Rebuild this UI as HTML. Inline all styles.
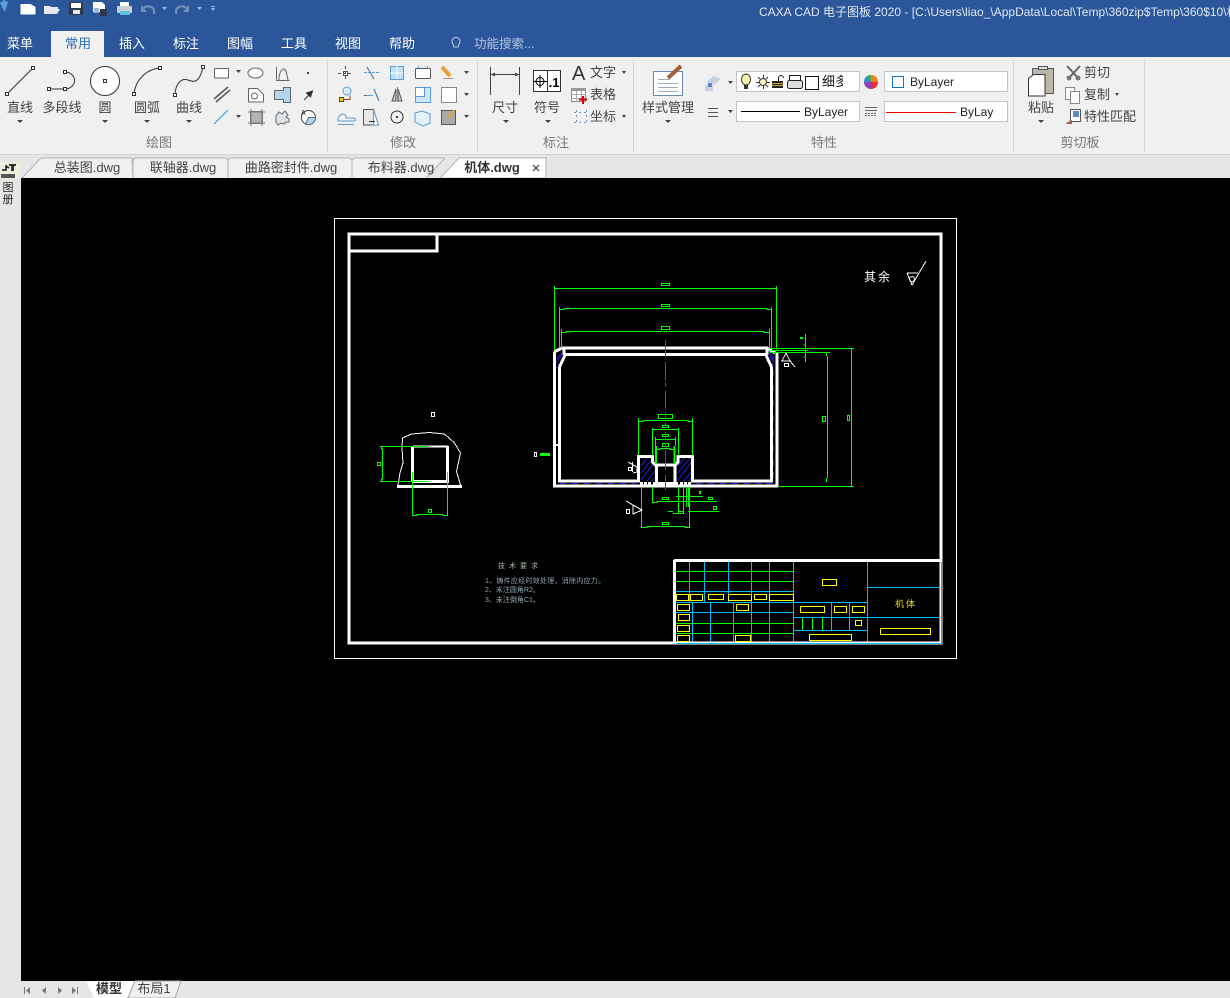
<!DOCTYPE html>
<html><head><meta charset="utf-8"><style>
html,body{margin:0;padding:0;background:#000;width:1230px;height:998px;overflow:hidden}
svg{display:block}
text{font-family:"Liberation Sans","Noto Sans CJK SC",sans-serif;font-size:13px;fill:#444}
.c{text-anchor:middle}
.w{fill:#fff}
.g{fill:#777}
.cad rect,.cad path,.cad line{shape-rendering:crispEdges}
.a{fill:#444}
</style></head><body>
<svg width="1230" height="998" viewBox="0 0 1230 998" xmlns="http://www.w3.org/2000/svg">
<rect width="1230" height="998" fill="#e6e6e6"/>
<rect width="1230" height="57" fill="#2b579a"/>
<rect y="57" width="1230" height="97" fill="#f0f0f0"/>
<rect y="154" width="1230" height="1" fill="#d4d4d4"/>
<!-- quick access -->
<path d="M0 3l4-3 4 2-3 10-2-3z" fill="#5aa0e0"/>
<path d="M20.500 4h10l5 3v7.500h-15z" fill="#fff"/>
<path d="M44 6h6l1 1h7v2H49l-2 5H44zM48 9h12l-3 5H45z" fill="#e4e9f0"/>
<rect x="69" y="2" width="14" height="13" rx="1" fill="#2f3a48"/><rect x="71" y="3" width="10" height="5" fill="#fff"/><rect x="73" y="10" width="7" height="4" fill="#dfe6ee"/>
<path d="M93 2h9l3 3v7H93z" fill="#fff"/><rect x="100" y="9" width="7" height="7" fill="#2f3a48"/><rect x="94" y="8" width="5" height="5" fill="#9db7d8"/>
<rect x="120" y="2" width="9" height="5" fill="#fff"/><rect x="117" y="6" width="15" height="7" rx="1" fill="#c8d0da"/><rect x="120" y="11" width="10" height="4" fill="#5bc5e0"/>
<path d="M143 9a6 5 0 0 1 11 1v4" fill="none" stroke="#6f8fbd" stroke-width="2.200"/><path d="M141 5v7h6z" fill="#6f8fbd"/>
<path d="M162 7h5l-2.500 3z" fill="#9db7d8"/>
<path d="M187 9a6 5 0 0 0-11 1v4" fill="none" stroke="#6f8fbd" stroke-width="2.200"/><path d="M189 5v7h-6z" fill="#6f8fbd"/>
<path d="M197 7h5l-2.500 3z" fill="#9db7d8"/>
<path d="M211 6h4v1h-4zM211 8h4l-2 3z" fill="#9db7d8"/>
<text x="759" y="16" class="w" style="font-size:12px;fill:#dfe7f2">CAXA CAD 电子图板 2020 - [C:\Users\liao_\AppData\Local\Temp\360zip$Temp\360$10\机</text>
<!-- tabs -->
<rect x="51" y="31" width="53" height="27" fill="#f0f0f0"/>
<text x="20" y="48" class="c w">菜单</text>
<text x="78" y="48" class="c" style="fill:#2b6cb5">常用</text>
<text x="132" y="48" class="c w">插入</text>
<text x="186" y="48" class="c w">标注</text>
<text x="240" y="48" class="c w">图幅</text>
<text x="294" y="48" class="c w">工具</text>
<text x="348" y="48" class="c w">视图</text>
<text x="402" y="48" class="c w">帮助</text>
<path d="M453 44a4 4 0 1 1 6 0l-1 3h-4z" fill="none" stroke="#c0cde0"/>
<text x="474" y="48" style="fill:#b4c4dc;font-size:12.5px">功能搜索...</text>
<!-- separators -->
<g fill="#d4d4d4"><rect x="327" y="60" width="1" height="92"/><rect x="477" y="60" width="1" height="92"/><rect x="633" y="60" width="1" height="92"/><rect x="1013" y="60" width="1" height="92"/><rect x="1144" y="60" width="1" height="92"/></g>
<!-- draw group -->
<g fill="none" stroke="#333">
<path d="M7 94L33 68"/><rect x="5.500" y="92.500" width="3" height="3" fill="#fff"/><rect x="31.500" y="66.500" width="3" height="3" fill="#fff"/>
<path d="M49 89H65M65 72a9 8 0 0 1 0 17"/><rect x="47.500" y="87.500" width="3" height="3" fill="#fff"/><rect x="63.500" y="87.500" width="3" height="3" fill="#fff"/><rect x="63.500" y="70.500" width="3" height="3" fill="#fff"/>
<circle cx="105" cy="81" r="14.500" fill="#fff"/><rect x="103.500" y="79.500" width="3" height="3" fill="#fff"/>
<path d="M134 93C136 79 147 69 160 68"/><rect x="132.500" y="92.500" width="3" height="3" fill="#fff"/><rect x="158.500" y="66.500" width="3" height="3" fill="#fff"/>
<path d="M175 94C176 82 182 78 188 80S199 84 203 67"/><rect x="173.500" y="93.500" width="3" height="3" fill="#fff"/><rect x="201.500" y="65.500" width="3" height="3" fill="#fff"/>
</g>
<text x="20" y="112" class="c">直线</text><text x="62" y="112" class="c">多段线</text><text x="105" y="112" class="c">圆</text><text x="147" y="112" class="c">圆弧</text><text x="189" y="112" class="c">曲线</text>
<path class="a" d="M17 120h6l-3 3zM102 120h6l-3 3zM144 120h6l-3 3zM186 120h6l-3 3zM236 70h5l-2.500 3zM236 115h5l-2.500 3z"/>
<text x="159" y="147" class="c g">绘图</text>
<!-- small draw icons -->
<g fill="none" stroke="#666">
<rect x="214.500" y="68.500" width="14" height="9.500" fill="#fff"/>
<path d="M214 99L228 87M216 102L230 90" stroke-width="1.500" stroke="#555"/>
<path d="M214 124L228 110" stroke="#3aa0e0" stroke-width="1.200"/>
<ellipse cx="255.500" cy="73" rx="7.500" ry="5" fill="#fff"/>
<path d="M248.500 88.500h9l6 6v7.500h-15z" fill="#fff"/><circle cx="254.500" cy="96" r="3"/>
<rect x="250.500" y="111.500" width="12" height="12" fill="#b4b4b4" stroke="#777"/><path d="M248 112h17M248 123h17M251 109v17M262 109v17" stroke="#777"/>
<path d="M276.500 67v13.500h13M279 80c0-8 3-11 5-11s3 6 4 11"/>
<path d="M274.500 90.500h9v-3h7v15h-7v-3h-9z" fill="#b6d4ee"/>
<path d="M276 116l3-4 3 2 3-3 3 4-2 2 3 2v3h-3l-2 2-3-1-3 2-2-3z" fill="#dde4ea"/>
<circle cx="308.500" cy="117.500" r="7" fill="#fff" stroke="#444"/><path d="M308.500 117.500h7a7 7 0 0 1-10 6.500z" fill="#a9d6f5"/>
</g>
<text x="301" y="115" style="font-size:7px;fill:#222">A</text>
<rect x="307" y="72" width="2" height="2" fill="#444"/>
<path d="M304 100l8-8M312.500 91l-6 2 4 4z" stroke="#333" fill="#222"/>
<!-- modify group -->
<g fill="none" stroke="#555">
<path d="M345.500 66v14M338 73.500h15" stroke-dasharray="3 2"/><rect x="343.500" y="71.500" width="4" height="4"/>
<path d="M364 72.500h15" stroke="#5b9bd5" stroke-dasharray="3 1"/><path d="M367 67l7 12" stroke="#2f6fb5"/>
<rect x="390.500" y="66.500" width="13" height="13" fill="#bfe0f5" stroke="#5b9bd5"/><path d="M397 66v13M390 73h13" stroke="#fff"/>
<rect x="415.500" y="68.500" width="15" height="10" rx="1" fill="#fff"/><path d="M418.500 66v3M427.500 66v3" stroke="#5b9bd5"/>
<path d="M442 67l8 9" stroke="#e8a030" stroke-width="4"/><path d="M443 78.500h10" stroke="#999"/>
<rect x="339.500" y="97.500" width="4" height="4" fill="#f0d000" stroke="#444"/><circle cx="347" cy="91" r="4" stroke="#5b9bd5" fill="#d8ecf8"/><path d="M343 99.500h7v-4" stroke="#b03030"/>
<path d="M364 95.500h5" stroke="#555" stroke-dasharray="3 1"/><path d="M374 89l5 12" stroke="#2f6fb5"/><path d="M366 95.500h7" stroke="#5b9bd5"/>
<path d="M396 89l-4 12h4zM398 89l4 12h-4z" fill="#ccc"/><path d="M397.500 87v15" stroke="#5b9bd5"/>
<rect x="415.500" y="87.500" width="15" height="15" fill="#cfe8fa" stroke="#5b9bd5"/><rect x="415.500" y="87.500" width="9" height="9" fill="#fff" stroke="#5b9bd5"/>
<rect x="441.500" y="87.500" width="15" height="15" fill="#fff" stroke="#888"/>
<path d="M338 120c0-4 3-6 5-6s3 2 3 4h8c2 0 2 3 0 3h-16zM338 124.500h16" stroke="#5b9bd5"/>
<path d="M363.500 109.500h10l5 15.500h-15z" fill="#e6e6e6"/><path d="M373.500 109.500l5 15.500h-5z" fill="#fff" stroke="#5b9bd5"/><path d="M369 121.500h6" stroke="#333"/>
<circle cx="397" cy="117" r="6" stroke="#333"/><rect x="396" y="116" width="2" height="2" fill="#333" stroke="none"/>
<path d="M415 113l7-2 8 3v9l-7 3-8-4z" fill="#e4f2fb" stroke="#5b9bd5"/>
<rect x="441.500" y="110.500" width="14" height="14" fill="#aaa"/><path d="M454 110l-6 8" stroke="#e8a030" stroke-width="2"/>
</g>
<path class="a" d="M464 71h5l-2.500 3zM464 93h5l-2.500 3zM464 115h5l-2.500 3zM503 120h6l-3 3zM545 120h6l-3 3zM622 71h4l-2 3zM622 115h4l-2 3z"/>
<text x="403" y="147" class="c g">修改</text>
<!-- annotate -->
<path d="M490.500 67v28M519.500 67v28M491 74.500h28" fill="none" stroke="#444"/><path d="M491 74.500l4-2v4zM519 74.500l-4-2v4z" fill="#444"/>
<rect x="533.500" y="70.500" width="27" height="21" fill="#fff" stroke="#333"/><path d="M547.500 71v20" stroke="#333"/>
<circle cx="540" cy="81.500" r="4" fill="none" stroke="#000"/><path d="M533 81.500h14M540 75v13" stroke="#000"/>
<text x="554" y="87" class="c" style="fill:#000;font-weight:bold;font-size:13px">.1</text>
<text x="505" y="112" class="c">尺寸</text><text x="547" y="112" class="c">符号</text>
<text x="572" y="80" style="font-size:20px;fill:#333">A</text>
<text x="590" y="77">文字</text><text x="590" y="99">表格</text><text x="590" y="121">坐标</text>
<rect x="571.500" y="88.500" width="14" height="13" fill="#fff" stroke="#888"/><rect x="571" y="88" width="15" height="3" fill="#999"/><path d="M571 94.500h15M571 98.500h15M576.500 91v11M581.500 91v11" stroke="#aaa"/><path d="M579 99.500h8M583 96v8" stroke="#c00" stroke-width="2"/>
<path d="M574 112.500h14M574 122.500h14M576.500 110v14M586.500 110v14" fill="none" stroke="#5b9bd5" stroke-dasharray="2 3"/>
<text x="556" y="147" class="c g">标注</text>
<!-- properties -->
<rect x="653.500" y="71.500" width="29" height="24" fill="#fff" stroke="#6a8bb0"/><path d="M658 79.500h12M658 83.500h20M658 87.500h20M658 91.500h20" stroke="#9ab" fill="none"/>
<path d="M668 78l13-12" stroke="#a0623a" stroke-width="4"/>
<text x="668" y="112" class="c">样式管理</text>
<path class="a" d="M665 120h6l-3 3zM728 81h5l-2.500 3zM728 110h5l-2.500 3zM850 81h4l-2 3zM850 111h4l-2 3zM999 81h5l-2.500 3zM999 111h5l-2.500 3zM1038 120h6l-3 3zM1115 93h4l-2 3z"/>
<path d="M706 82l8-6 7 3-7 6zM705 85h8v6h-8z" fill="#c8d2dc"/><rect x="708" y="83" width="4" height="4" fill="#5b8bc5"/>
<path d="M708 108.500h10M708 112.500h10M708 116.500h10" stroke="#555" fill="none"/>
<rect x="736.500" y="71.500" width="123" height="20" fill="#fff" stroke="#c4c4c4"/>
<rect x="736.500" y="101.500" width="123" height="20" fill="#fff" stroke="#c4c4c4"/>
<rect x="884.500" y="71.500" width="123" height="20" fill="#fff" stroke="#c4c4c4"/>
<rect x="884.500" y="101.500" width="123" height="20" fill="#fff" stroke="#c4c4c4"/>
<ellipse cx="746" cy="79.500" rx="4.500" ry="5.500" fill="#fdf3b0" stroke="#333"/><rect x="744" y="85" width="4" height="4" fill="#333"/>
<circle cx="763" cy="82" r="3.500" fill="#fff6c0" stroke="#333"/><path d="M756 82.500h3M767 82.500h3M763.500 75v3M763.500 86v3M758 77l2 2M766 85l2 2M768 77l-2 2M760 85l-2 2" stroke="#333"/>
<rect x="772" y="81" width="11" height="7" fill="#222"/><path d="M778.500 81v-3a2.500 2.500 0 0 1 5 0" stroke="#222" fill="none"/><path d="M772 83.500h11M772 85.500h11" stroke="#c9b030"/>
<rect x="789.500" y="75.500" width="11" height="5" fill="#fff" stroke="#222"/><rect x="787.500" y="80.500" width="15" height="8" rx="2" fill="#ddd" stroke="#222"/>
<rect x="805.500" y="76.500" width="13" height="13" fill="#fff" stroke="#111"/>
<svg x="822" y="70" width="21" height="22"><text x="0" y="16" style="fill:#111;font-size:13px">细多</text></svg>
<circle cx="871" cy="82" r="7" fill="#f5c518"/><path d="M871 82L871 75A7 7 0 0 1 878 82z" fill="#f08020"/><path d="M871 82H878A7 7 0 0 1 871 89z" fill="#e03030"/><path d="M871 82V89A7 7 0 0 1 864 82z" fill="#9040c0"/><path d="M871 82H864A7 7 0 0 1 867 76z" fill="#3090e0"/><path d="M871 82L867 76A7 7 0 0 1 871 75z" fill="#40b040"/>
<rect x="892.500" y="76.500" width="11" height="11" fill="#fff" stroke="#0a74d0"/>
<text x="910" y="86" style="fill:#222;font-size:12px">ByLayer</text>
<rect x="741" y="111" width="59" height="1" fill="#000"/>
<text x="804" y="116" style="fill:#222;font-size:12px">ByLayer</text>
<path d="M865 107.500h12M865 110.500h12" stroke="#666" fill="none"/><path d="M865 113.500h12M865 115.500h12" stroke="#666" stroke-dasharray="2 1" fill="none"/>
<rect x="886" y="112" width="70" height="1" fill="#e00"/>
<svg x="955" y="100" width="38" height="22"><text x="5" y="16" style="fill:#222;font-size:12px">ByLayer</text></svg>
<text x="824" y="147" class="c g">特性</text>
<!-- clipboard -->
<rect x="1032.500" y="68.500" width="21" height="25" fill="#bdb7a8" stroke="#555"/><rect x="1038.500" y="66.500" width="9" height="3" fill="#ddd" stroke="#555"/>
<path d="M1028.500 78.500l5-4h11.500v21.500h-16.500z" fill="#fff" stroke="#333"/>
<text x="1041" y="112" class="c">粘贴</text>
<path d="M1067 66l12 13M1080 66l-12 13" stroke="#666" stroke-width="2"/><circle cx="1069" cy="78" r="2.500" fill="#777"/><circle cx="1078" cy="78" r="2.500" fill="#777"/>
<rect x="1065.500" y="87.500" width="9" height="12" fill="#fff" stroke="#888"/><rect x="1070.500" y="91.500" width="9" height="12" fill="#fff" stroke="#888"/>
<rect x="1070.500" y="109.500" width="10" height="12" fill="#fff" stroke="#555"/><rect x="1073" y="111" width="6" height="6" fill="#5b8bc5"/><path d="M1066 123l6-3v4h-5z" fill="#a0623a"/>
<text x="1084" y="77">剪切</text><text x="1084" y="99">复制</text><text x="1084" y="121">特性匹配</text>
<text x="1080" y="147" class="c g">剪切板</text>
<!-- doc tabs -->
<g fill="#f0f0f0" stroke="#b4b4b4">
<path d="M22 178L41 158H132L133 178"/>
<path d="M133 178V160l2-2H226l2 2v18"/>
<path d="M228 178V160l2-2H350l2 2v18"/>
<path d="M352 178V160l2-2H445l-19 20"/>
</g>
<path d="M440 178L459 158H546V178z" fill="#fff" stroke="#b4b4b4"/>
<text x="87" y="172" class="c">总装图.dwg</text><text x="183" y="172" class="c">联轴器.dwg</text><text x="291" y="172" class="c">曲路密封件.dwg</text><text x="401" y="172" class="c">布料器.dwg</text>
<text x="492" y="172" class="c" style="font-weight:bold;fill:#333">机体.dwg</text>
<path d="M533 165l6 6M539 165l-6 6" stroke="#555" stroke-width="1.300"/>
<!-- left vertical -->
<rect x="0" y="162" width="20" height="17" fill="#eeeedc"/>
<path d="M2 170h4v-4l3 2" fill="none" stroke="#111" stroke-width="1.500"/><rect x="9" y="164" width="7" height="2" fill="#333"/><rect x="11" y="165" width="3" height="6" fill="#333"/><rect x="1" y="174" width="14" height="4" fill="#555"/>
<text x="8" y="191" class="c" style="fill:#222;font-size:11px">图</text>
<text x="8" y="203" class="c" style="fill:#222;font-size:11px">册</text>
<!-- canvas -->
<rect x="21" y="178" width="1209" height="803" fill="#000"/>
<g class="cad" fill="none">
<rect x="334.500" y="218.500" width="622" height="440" stroke="#fff"/>
<!-- title block grid -->
<g stroke="#00bfff">
<path d="M689.500 561V602M704.500 561V602M728.500 561V602M751.500 561V643M769.500 561V643M793.500 561V643M867.500 561V643"/>
<path d="M692.500 602V643M710.500 602V643M733.500 602V643M831.500 602V630M849.500 602V630"/>
<path d="M675 591.500H793M675 602.500H867M675 612.500H793M793 617.500H941M793 630.500H867M867 587.500H941"/>
</g>
<g stroke="#00ff00"><path d="M675 571.500H793M675 581.500H793M675 623.500H793M675 633.500H793M802.500 618V630M812.500 618V630M822.500 618V630"/></g>
<rect x="349" y="234" width="592" height="409" stroke="#fff" stroke-width="3"/>
<path d="M437 234v17H349" stroke="#fff" stroke-width="3"/>
<path d="M941.500 562V643M676 643.500H942" stroke="#00bfff"/>
<rect x="674" y="559" width="268" height="3" fill="#fff"/><rect x="673" y="560" width="3" height="84" fill="#fff"/>
<!-- blue hatch -->
<g stroke="#2020e8" stroke-width="1">
<path d="M556 362l6-7M556 368l8-9M557 358l5-5"/>
<path d="M641 466l6-8M641 473l12-15M641 480l14-18M647 481l8-10M652 481l3-4"/>
<path d="M678 466l6-8M678 473l12-15M678 480l13-17M684 481l7-9M689 481l2-3"/>
<path d="M560 483.500h6M572 483.500h6M584 483.500h6M596 483.500h6M608 483.500h6M620 483.500h6M632 483.500h4M696 483.500h6M708 483.500h6M720 483.500h6M732 483.500h6M744 483.500h6M756 483.500h6M766 483.500h6"/>
<path d="M774 358l-2 0M773.500 370v6M773.500 385v6M773.500 400v6M773.500 415v6M773.500 430v6M773.500 445v6M773.500 460v6M773.500 472v6"/>
<path d="M768 351l5 6M770 356l4 6M770 362l4 4"/>
</g>
<!-- part -->
<g stroke="#fff" stroke-width="3">
<path d="M554.500 352V486H777V353"/>
<path d="M554 352l8-4H767l8 5"/>
<path d="M565 354.500H766"/>
<path d="M559.500 367V481H638.500V456.500H652.500V462l3 3H675l3-3V456.500H692.500V481H771.500V367"/>
<path d="M559.500 367l6-13M771.500 367l-6-13"/>
<path d="M564 348v7M767 348v7"/>
<path d="M656.500 465V484M675 465V484"/>
</g>
<path d="M556 445h4" stroke="#fff" stroke-width="2"/>
<rect x="640" y="482" width="3" height="3" fill="#fff"/><rect x="644" y="482" width="3" height="3" fill="#fff"/><rect x="648" y="482" width="3" height="3" fill="#fff"/>
<rect x="653" y="482" width="25" height="4" fill="#fff"/>
<rect x="680" y="482" width="3" height="3" fill="#fff"/><rect x="684" y="482" width="3" height="3" fill="#fff"/><rect x="688" y="482" width="3" height="3" fill="#fff"/>
<!-- dims -->
<g stroke="#00ff00">
<path d="M554.500 286V350M776.500 286V350M554 288.500H777"/>
<path d="M559.500 307V348M771.500 307V348M559.500 309.500H564V308.500H767V309.500H771"/>
<path d="M561.500 329V348M769.500 329V348M561.500 332.500H566V331.500H764V332.500H769"/>
<path d="M770 348.500H854M770 350.500H808M770 352.500H830M805.500 334V362M803.500 345H805M803.500 357H805"/>
<path d="M827.500 356V478M826.500 353V356M826.500 478V482M851.500 348V486M777 486.500H854"/>
<path d="M638.500 418V455M692.500 418V455M638.500 421.500H643V420.500H688V421.500H692"/>
<path d="M652.500 428V455M678.500 428V455M652.500 429.500H678"/>
<path d="M655.500 437V446M675.500 437V446M655.500 439.500H675"/>
<path d="M657 449.500H660V448.500H670V449.500H674"/>
<path d="M656 446V464M674.500 446V464" stroke-width="2"/>
<path d="M652.500 487V503M653 502.500H657V501.500H717M676 496.500H703"/>
<path d="M641.500 487V528M689.500 487V528M641.500 527.500H647V526.500H685V527.500H689"/>
<path d="M678.500 487V513M683.500 487V514M686.500 487V507M688.500 487V507M668 511.500H673M678 511.500H683M688 511.500H719M673 513.500H683"/>
<rect x="661.500" y="283.500" width="8" height="2"/><rect x="661.500" y="304.500" width="8" height="2"/><rect x="661.500" y="326.500" width="8" height="3"/>
<rect x="658.500" y="414.500" width="14" height="4"/><rect x="662.500" y="425.500" width="6" height="2"/><rect x="662.500" y="434.500" width="6" height="2"/><rect x="662.500" y="443.500" width="6" height="3"/>
<rect x="662.500" y="497.500" width="6" height="2"/><rect x="708.500" y="497.500" width="4" height="2"/><rect x="713.500" y="506.500" width="3" height="3"/><rect x="662.500" y="522.500" width="6" height="2"/>
<rect x="822.500" y="416.500" width="3" height="5"/><rect x="847.500" y="415.500" width="2" height="5"/>
</g>
<rect x="800" y="337" width="3" height="2" fill="#00ff00"/><rect x="699" y="491" width="2" height="3" fill="#00ff00"/>
<rect x="540" y="453" width="10" height="3" fill="#00ff00"/>
<rect x="534.500" y="452.500" width="2" height="4" stroke="#fff"/>
<!-- centre line -->
<path d="M665.500 340V357M665.500 362V380M665.500 383V387M665.500 391V409M665.500 412V420M665.500 423V428M665.500 432V440M665.500 443V447M665.500 450V470M665.500 475V490" stroke="#d82020"/>
<!-- symbols -->
<g stroke="#fff">
<path d="M786 353l-4 8h8zM781 361h10M790 361l5 6"/><rect x="784.500" y="363.500" width="4" height="3"/>
<path d="M628 462l9 5v5l-4 1M632.500 462v10"/><rect x="628.500" y="467.500" width="3" height="3"/>
<path d="M626 501l7 4l9 5l-9 4v-9"/><rect x="626.500" y="509.500" width="3" height="4"/>
<rect x="431.500" y="412.500" width="3" height="4"/>
<path d="M907 273H918M907 273L912 285L926 261"/>
</g>
<path d="M398 485l2-12 3-10-1-15 0.500-10 9-4 18-1.500 15 1.500 10 9 6 10-4 18.500 4 13.500" stroke="#fff"/>
<circle cx="912" cy="279" r="2.500" stroke="#fff" style="shape-rendering:auto"/>
<path d="M397 486.500H462" stroke="#fff" stroke-width="3"/>
<path d="M412.500 446V481M447.500 446V481M412 481.500H449" stroke="#fff" stroke-width="3"/>
<path d="M413 446.500H448" stroke="#fff" stroke-width="2"/>
<g stroke="#00ff00">
<path d="M380 446.500H429M380 481.500H429M381.500 447v2h1v30h-1v2"/>
<rect x="377.500" y="462.500" width="3" height="3"/>
<path d="M412.500 472V516M447.500 472V516M412.500 515.500H417V514.500H443V515.500H447"/>
<rect x="428.500" y="509.500" width="3" height="3"/>
</g>
<g stroke="#ffff00">
<rect x="822.500" y="579.500" width="14" height="6"/>
<rect x="676.500" y="594.500" width="12" height="6"/><rect x="690.500" y="594.500" width="12" height="6"/><rect x="708.500" y="594.500" width="15" height="5"/><rect x="728.500" y="594.500" width="23" height="6"/><rect x="754.500" y="594.500" width="12" height="5"/><rect x="769.500" y="594.500" width="24" height="6"/>
<rect x="677.500" y="604.500" width="12" height="6"/><rect x="736.500" y="604.500" width="12" height="6"/><rect x="678.500" y="614.500" width="11" height="6"/><rect x="677.500" y="625.500" width="12" height="6"/><rect x="677.500" y="635.500" width="12" height="6"/><rect x="735.500" y="635.500" width="15" height="6"/>
<rect x="800.500" y="606.500" width="24" height="6"/><rect x="834.500" y="606.500" width="12" height="6"/><rect x="852.500" y="606.500" width="12" height="6"/><rect x="855.500" y="620.500" width="6" height="5"/>
<rect x="809.500" y="634.500" width="42" height="6"/><rect x="880.500" y="628.500" width="50" height="6"/>
</g>
</g>
<text x="895" y="607" style="fill:#e0e020;font-size:9px" textLength="20">机 体</text>
<text x="864" y="281" class="w" style="font-size:12px" textLength="26">其余</text>
<text x="498" y="568" style="fill:#a8b8a8;font-size:7px" textLength="40">技 术 要 求</text>
<text x="485" y="583" style="fill:#8fa8b0;font-size:7px" textLength="120">1、铸件应经时效处理，消除内应力。</text>
<text x="485" y="592" style="fill:#8fa8b0;font-size:7px">2、未注圆角R2。</text>
<text x="485" y="602" style="fill:#8fa8b0;font-size:7px">3、未注倒角C1。</text>
<!-- bottom bar -->
<g fill="#777"><rect x="24" y="987" width="1" height="7"/><path d="M30 987v7l-4-3.500zM46 987v7l-4-3.500zM58 987v7l4-3.500zM72 987v7l4-3.500z"/><rect x="77" y="987" width="1" height="7"/></g>
<path d="M86 981l8 17h33l7-17z" fill="#fff"/>
<path d="M128 998l7-17h46l-6 17z" fill="#f0f0f0" stroke="#aaa"/>
<text x="109" y="993" class="c" style="font-weight:bold;fill:#333">模型</text>
<text x="154" y="993" class="c">布局1</text>
</svg>
</body></html>
